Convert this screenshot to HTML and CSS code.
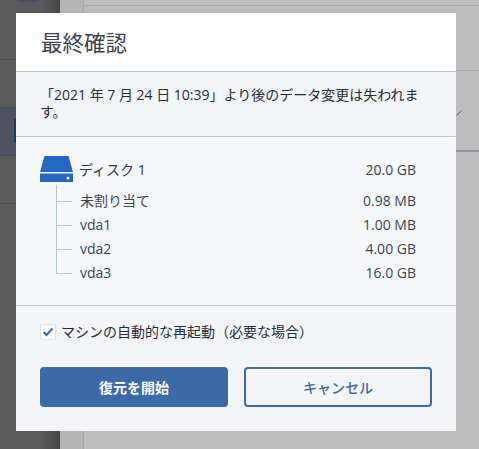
FILE: index.html
```html
<!DOCTYPE html>
<html lang="ja">
<head>
<meta charset="utf-8">
<title>最終確認</title>
<link rel="stylesheet" href="styles.css">
</head>
<body>
<div class="backdrop">
  <aside class="sidebar">
    <div class="side-row side-top"><span class="side-btn"></span></div>
    <div class="side-row"></div>
    <div class="side-row side-active"><span class="side-mark"></span></div>
    <div class="side-row"></div>
  </aside>
  <div class="subnav"></div>
  <main class="content">
    <div class="content-row content-first"></div>
    <div class="content-row content-second"></div>
    <div class="content-row content-third"></div>
  </main>
</div>
<svg class="chevron" width="6" height="6" viewBox="0 0 6 6"><path d="M0.5 5.5 L5.5 0.5" stroke="#4a5c8a" stroke-width="1" fill="none"/></svg>
<section class="dialog">
  <header class="dialog-head"><h1 class="dialog-title">最終確認</h1></header>
  <p class="notice">「2021 年 7 月 24 日 10:39」より後のデータ変更は失われます。</p>
  <div class="disk">
    <div class="disk-head">
      <svg class="disk-icon" width="33" height="26" viewBox="0 0 33 26">
        <path d="M4.500 0H28.500L33 16H0Z" fill="#2468c4"/>
        <rect x="0" y="17.500" width="33" height="8.500" fill="#2468c4"/>
        <circle cx="28" cy="22" r="1.500" fill="#fff"/>
      </svg>
      <span class="disk-name">ディスク 1</span>
      <span class="size">20.0 GB</span>
    </div>
    <ul class="parts">
      <li class="part part-first"><span class="part-name">未割り当て</span><span class="size">0.98 MB</span></li>
      <li class="part"><span class="part-name">vda1</span><span class="size">1.00 MB</span></li>
      <li class="part"><span class="part-name">vda2</span><span class="size">4.00 GB</span></li>
      <li class="part part-last"><span class="part-name">vda3</span><span class="size">16.0 GB</span></li>
    </ul>
  </div>
  <footer class="dialog-foot">
    <label class="check">
      <span class="check-box">
        <svg width="12" height="10" viewBox="0 0 12 10"><path d="M1.500 5 L4.500 8 L10.500 1.500" stroke="#3a69a8" stroke-width="2" fill="none"/></svg>
      </span>
      <span>マシンの自動的な再起動（必要な場合）</span>
    </label>
    <div class="actions">
      <button class="btn btn-primary">復元を開始</button>
      <button class="btn btn-secondary">キャンセル</button>
    </div>
  </footer>
</section>
</body>
</html>
```
FILE: styles.css
```css
* { box-sizing: border-box; }
html, body { margin: 0; padding: 0; height: 100%; overflow: hidden; }
body {
  font-family: "Open Sans", "Noto Sans CJK JP", sans-serif;
  color: #2f3542;
  background: #b6b6b6;
}
.backdrop { display: flex; height: 449px; width: 479px; }
.sidebar {
  width: 60px;
  flex: none;
  background: linear-gradient(90deg, #5b5b5b 0, #5b5b5b 70%, #454545 100%);
}
.side-row { height: 48px; border-bottom: 1px solid #4d4d4d; }
.side-top { height: 60px; padding-left: 17px; }
.side-btn {
  display: block;
  width: 22px;
  height: 2px;
  background: #4a4e60;
  border-radius: 0 0 3px 3px;
}
.side-active { background: #4d5260; padding-top: 11px; }
.side-mark { display: block; width: 3px; height: 24px; margin-left: 14px; background: #1f3860; }
.subnav {
  width: 24px;
  flex: none;
  background: #b6b6b6;
  border-right: 1px solid #a3a8b8;
}
.content { flex: 1; background: #bebebe; }
.content-row { border-bottom: 1px solid #aaaaaa; }
.content-first { height: 6px; }
.content-second { height: 65px; }
.content-third { height: 81px; border-bottom: 2px solid #9297a5; }
.chevron { position: absolute; left: 456px; top: 110px; }
.dialog {
  position: absolute;
  left: 16px;
  top: 13px;
  width: 440px;
  height: 418px;
  display: flex;
  flex-direction: column;
  background: #f3f5f8;
}
.dialog-head {
  height: 59px;
  flex: none;
  background: #fff;
  border-bottom: 1px solid #b3c4dc;
  display: flex;
  align-items: center;
  padding-left: 25px;
  padding-top: 2px;
}
.dialog-title { margin: 0; font-size: 21.500px; font-weight: 400; line-height: 30px; color: #3b4250; }
.notice {
  margin: 0;
  height: 65px;
  flex: none;
  padding: 14px 24px 0 24px;
  font-size: 14px;
  line-height: 17px;
  color: #262c38;
  border-bottom: 1px solid #b3c4dc;
}
.disk {
  height: 169px;
  flex: none;
  background: #f6f8fc;
  border-bottom: 1px solid #b3c4dc;
  padding: 19px 24px 0 24px;
}
.disk-head { display: flex; align-items: center; height: 26px; }
.disk-icon { flex: none; margin-right: 6px; }
.disk-name { flex: 1; font-size: 14px; }
.size { font-size: 14px; color: #3d4552; margin-right: 16px; }
.parts { list-style: none; margin: 3px 0 0 16px; padding: 0; }
.part {
  position: relative;
  display: flex;
  align-items: center;
  justify-content: space-between;
  height: 24px;
  padding-left: 24px;
  padding-bottom: 2px;
  font-size: 14px;
}
.part::before {
  content: "";
  position: absolute;
  left: 0;
  top: 0;
  bottom: 0;
  width: 1px;
  background: #b3c4dc;
}
.part::after {
  content: "";
  position: absolute;
  left: 0;
  top: 50%;
  width: 16px;
  height: 1px;
  background: #b3c4dc;
}
.part-first { height: 28px; padding-top: 4px; }
.part-first::after { top: 16px; }
.part-last::before { bottom: 11px; }
.part-name { color: #3d4552; }
.dialog-foot { padding: 0 24px; flex: 1; }
.check { display: flex; align-items: center; gap: 5px; margin-top: 17px; font-size: 14px; line-height: 17px; color: #262c38; }
.check-box {
  width: 16px;
  height: 16px;
  flex: none;
  display: flex;
  align-items: center;
  justify-content: center;
  background: #fff;
  border: 1px solid #dfe3ea;
}
.actions { display: flex; justify-content: space-between; margin-top: 27px; }
.btn {
  width: 188px;
  height: 40px;
  border-radius: 4px;
  font-family: inherit;
  font-size: 14px;
  font-weight: 700;
  padding: 0;
}
.btn-primary { background: #3c69a7; color: #fff; border: none; }
.btn-secondary { background: transparent; color: #3c69a7; border: 2px solid #3c69a7; font-weight: 500; }
```
